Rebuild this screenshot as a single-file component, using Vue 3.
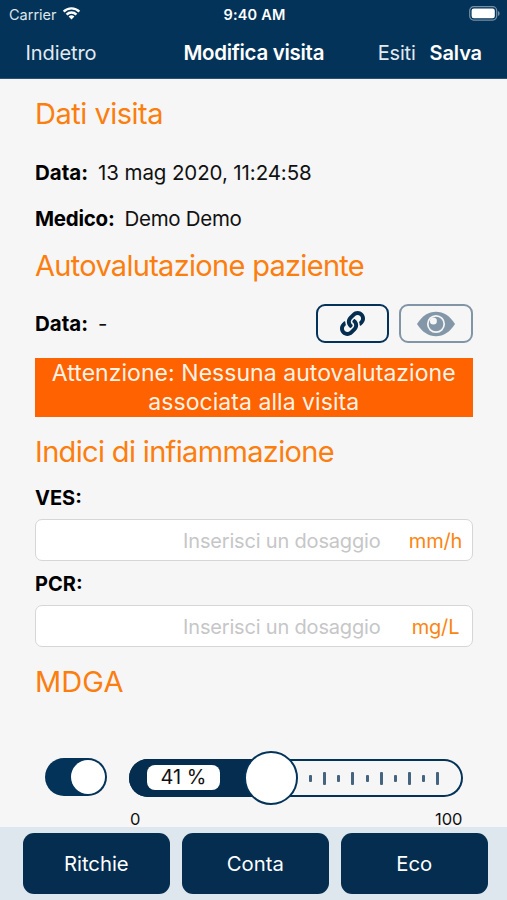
<template>
  <div class="screen">
    <header class="header">
      <div class="status-bar">
        <div class="carrier">
          <span>Carrier</span>
          <svg class="wifi" viewBox="0 0 18 14">
            <path d="M0.3 4.7a12.4 12.4 0 0 1 17.4 0l-1.7 1.8a9.9 9.9 0 0 0-14 0z" />
            <path d="M3.2 7.7a8.2 8.2 0 0 1 11.6 0l-1.8 1.8a5.7 5.7 0 0 0-8 0z" />
            <path d="M6.1 10.6a4.1 4.1 0 0 1 5.8 0L9 13.6z" />
          </svg>
        </div>
        <span class="clock">9:40 AM</span>
        <svg class="battery" viewBox="0 0 31 15">
          <rect x="0.7" y="0.7" width="27" height="13.4" rx="4" class="battery-case" />
          <rect x="2.6" y="2.6" width="23.2" height="9.6" rx="2.2" class="battery-level" />
          <path d="M29 5v5c1-.4 1.6-1.4 1.6-2.5S30 5.4 29 5z" class="battery-tip" />
        </svg>
      </div>
      <nav class="nav-bar">
        <a class="nav-link back">Indietro</a>
        <h1 class="nav-title">Modifica visita</h1>
        <div class="nav-actions">
          <a class="nav-link esiti">Esiti</a>
          <a class="nav-link save">Salva</a>
        </div>
      </nav>
    </header>

    <main class="content">
      <h2 class="section-title first">Dati visita</h2>
      <div class="info">
        <p class="info-row"><b>Data:</b><span class="date">13 mag 2020, 11:24:58</span></p>
        <p class="info-row"><b class="medico">Medico:</b><span class="name">Demo Demo</span></p>
      </div>

      <h2 class="section-title assessment">Autovalutazione paziente</h2>
      <div class="assessment-row">
        <p class="info-row"><b>Data:</b><span>-</span></p>
        <div class="icon-buttons">
          <button type="button" class="icon-button">
            <svg class="link-icon" viewBox="0 0 512 512">
              <path d="M326.612 185.391c59.747 59.809 58.927 155.698.36 214.59-.11.12-.24.25-.36.37l-67.2 67.2c-59.27 59.27-155.699 59.262-214.96 0-59.27-59.26-59.27-155.7 0-214.96l37.106-37.106c9.84-9.84 26.786-3.3 27.294 10.606.648 17.722 3.826 35.527 9.69 52.721 1.986 5.822.567 12.262-3.783 16.612l-13.087 13.087c-28.026 28.026-28.905 73.66-1.155 101.96 28.024 28.579 74.086 28.749 102.325.51l67.2-67.19c28.191-28.191 28.073-73.757 0-101.83-3.701-3.694-7.429-6.564-10.341-8.569a16.037 16.037 0 0 1-6.947-12.606c-.396-10.567 3.348-21.456 11.698-29.806l21.054-21.055c5.521-5.521 14.182-6.199 20.584-1.731a152.482 152.482 0 0 1 20.522 17.197zM467.547 44.449c-59.261-59.262-155.69-59.27-214.96 0l-67.2 67.2c-.12.12-.25.25-.36.37-58.566 58.892-59.387 154.781.36 214.59a152.454 152.454 0 0 0 20.521 17.196c6.402 4.468 15.064 3.789 20.584-1.731l21.054-21.055c8.35-8.35 12.094-19.239 11.698-29.806a16.037 16.037 0 0 0-6.947-12.606c-2.912-2.005-6.64-4.875-10.341-8.569-28.073-28.073-28.191-73.639 0-101.83l67.2-67.19c28.239-28.239 74.3-28.069 102.325.51 27.75 28.3 26.872 73.934-1.155 101.96l-13.087 13.087c-4.35 4.35-5.769 10.79-3.783 16.612 5.864 17.194 9.042 34.999 9.69 52.721.509 13.906 17.454 20.446 27.294 10.606l37.106-37.106c59.271-59.259 59.271-155.699.001-214.959z" />
            </svg>
          </button>
          <button type="button" class="icon-button disabled">
            <svg class="eye-icon" viewBox="0 0 38 26">
              <path d="M0 13C5 5 11.5.8 19 .8S33 5 38 13C33 21 26.5 25.2 19 25.2S5 21 0 13z" />
              <circle cx="19" cy="13" r="8.2" class="eye-ring" />
              <circle cx="16.4" cy="9.9" r="3.5" class="eye-glint" />
            </svg>
          </button>
        </div>
      </div>
      <div class="alert">
        <span class="alert-first">Attenzione: Nessuna autovalutazione</span>
        <span class="alert-second">associata alla visita</span>
      </div>

      <h2 class="section-title indices">Indici di infiammazione</h2>
      <div v-for="field in fields" :key="field.label" class="field">
        <label class="field-label" :for="field.label">{{ field.label }}:</label>
        <div class="field-box">
          <input :id="field.label" v-model="field.value" class="field-input" placeholder="Inserisci un dosaggio" />
          <span class="unit">{{ field.unit }}</span>
        </div>
      </div>

      <h2 class="section-title mdga">MDGA</h2>
      <div class="slider-row">
        <button type="button" :class="['toggle', { on: enabled }]" @click="enabled = !enabled">
          <span class="toggle-knob"></span>
        </button>
        <div class="slider">
          <div class="track">
            <div class="fill" :style="{ width: fillWidth }">
              <span class="percent">{{ mdga }} %</span>
            </div>
            <div class="ticks">
              <i v-for="n in 10" :key="n" :class="['tick', { tall: n % 2 === 0 }]"></i>
            </div>
          </div>
          <span class="thumb" :style="{ left: fillWidth }"></span>
        </div>
      </div>
      <div class="scale"><span>0</span><span>100</span></div>
    </main>

    <footer class="footer">
      <button v-for="action in actions" :key="action" type="button" class="action">{{ action }}</button>
    </footer>
  </div>
</template>

<script setup>
import { computed, ref } from 'vue';

const fields = ref([
  { label: 'VES', unit: 'mm/h', value: '' },
  { label: 'PCR', unit: 'mg/L', value: '' },
]);
const actions = ['Ritchie', 'Conta', 'Eco'];

const enabled = ref(true);
const mdga = ref(41);

// the thumb travels inside the rounded ends of the track
const fillWidth = computed(() => `${27 + (mdga.value / 100) * 280}px`);
</script>

<style>
body {
  margin: 0;
  background: #f6f6f6;
}
</style>

<style scoped>
.screen {
  width: 507px;
  height: 900px;
  display: flex;
  flex-direction: column;
  overflow: hidden;
  background: #f6f6f6;
  color: #111;
  font-family: Inter, "Liberation Sans", sans-serif;
  font-size: 20.5px;
}

button {
  padding: 0;
  border: none;
  font-family: inherit;
}

/* Header */
.header {
  flex: none;
  height: 79px;
  box-sizing: border-box;
  background: #043359;
  border-bottom: 1px solid #2b5273;
  color: #fff;
}

.status-bar {
  height: 28px;
  padding: 0 7px 0 9px;
  display: grid;
  grid-template-columns: 1fr auto 1fr;
  align-items: center;
  font-size: 14.5px;
}

.carrier {
  display: flex;
  align-items: center;
  gap: 5px;
  color: #dde5eb;
}

.wifi {
  width: 19px;
  height: 14px;
  margin-top: -2px;
  fill: #fff;
}

.clock {
  font-weight: 600;
  letter-spacing: 0.2px;
}

.battery {
  width: 31px;
  height: 15px;
  justify-self: end;
  margin-top: -2px;
}

.battery-case {
  fill: none;
  stroke: #7590a5;
  stroke-width: 1.2;
}

.battery-level {
  fill: #fff;
}

.battery-tip {
  fill: #7590a5;
}

.nav-bar {
  height: 49px;
  padding: 0 25px 0 25.5px;
  display: grid;
  grid-template-columns: 1fr auto 1fr;
  align-items: center;
  font-size: 20px;
  line-height: 24px;
}

.nav-title {
  margin: 0;
  font-size: 20.5px;
  font-weight: 600;
  letter-spacing: -0.3px;
}

.nav-link {
  color: #e2eaf1;
}

.back {
  letter-spacing: -0.1px;
}

.nav-actions {
  display: flex;
  justify-content: flex-end;
  gap: 14px;
}

.esiti {
  letter-spacing: -0.2px;
}

.nav-link.save {
  color: #fff;
  font-weight: 600;
  letter-spacing: -0.1px;
}

/* Content */
.content {
  flex: 1;
  min-height: 0;
  padding: 17px 34.5px 0 35px;
}

.section-title {
  margin: 0;
  height: 36px;
  line-height: 36px;
  color: #fb7e0e;
  font-size: 29px;
  font-weight: 400;
  letter-spacing: -0.7px;
  white-space: nowrap;
}

.section-title.first {
  letter-spacing: -0.5px;
}

.info {
  margin-top: 17px;
}

.info-row {
  margin: 0;
  height: 46px;
  display: flex;
  align-items: center;
  gap: 10px;
  white-space: nowrap;
}

.info-row b {
  font-weight: 700;
  color: #000;
}

.date {
  letter-spacing: -0.1px;
}

.medico {
  letter-spacing: -0.25px;
}

.name {
  letter-spacing: -0.3px;
}

.section-title.assessment {
  margin-top: 7px;
}

.assessment-row {
  margin-top: 20px;
  height: 39px;
  display: flex;
  align-items: center;
  justify-content: space-between;
}

.icon-buttons {
  display: flex;
  gap: 10px;
}

.icon-button {
  width: 73.5px;
  height: 39px;
  box-sizing: border-box;
  display: flex;
  align-items: center;
  justify-content: center;
  border: 2px solid #043359;
  border-radius: 9px;
  background: transparent;
}

.icon-button.disabled {
  border-color: #8295a6;
}

.link-icon {
  width: 25px;
  height: 25px;
  fill: #042d4f;
}

.eye-icon {
  width: 38px;
  height: 26px;
  fill: #8397a8;
}

.eye-ring {
  fill: none;
  stroke: #f6f6f6;
  stroke-width: 1.7;
}

.eye-glint {
  fill: #f6f6f6;
}

.alert {
  margin-top: 15px;
  height: 59px;
  display: flex;
  flex-direction: column;
  align-items: center;
  justify-content: center;
  background: #ff6200;
  color: #fff3e6;
  font-size: 23px;
  line-height: 29px;
  letter-spacing: 0.05px;
  white-space: nowrap;
}

.section-title.indices {
  margin: 17px 0 14px;
  letter-spacing: -0.66px;
}

.field-label {
  display: block;
  height: 28px;
  line-height: 28px;
  color: #000;
  font-size: 20px;
  font-weight: 700;
}

.field-box {
  margin: 7px 0 9px;
  height: 42px;
  box-sizing: border-box;
  padding-top: 2px;
  display: flex;
  align-items: center;
  border: 1.5px solid #d6d6d6;
  border-radius: 7px;
  background: #fff;
}

.field-input {
  flex: 1;
  min-width: 0;
  padding: 0 18px 0 0;
  border: none;
  outline: none;
  background: transparent;
  font: inherit;
  font-size: 20px;
  letter-spacing: -0.18px;
  text-align: right;
}

.field-input::placeholder {
  color: #c6c6c8;
  opacity: 1;
}

.unit {
  width: 73px;
  padding-left: 1px;
  box-sizing: border-box;
  text-align: center;
  color: #fb8510;
  font-size: 20px;
  letter-spacing: -0.2px;
}

.section-title.mdga {
  margin-top: 17px;
  letter-spacing: 0.1px;
}

/* Slider */
.slider-row {
  margin-top: 51px;
  height: 54px;
  padding: 0 10px;
  display: flex;
  align-items: center;
  gap: 22px;
}

.toggle {
  width: 62px;
  height: 38px;
  margin-top: -2px;
  padding: 2px;
  display: flex;
  align-items: center;
  border-radius: 19px;
  background: #b9c4ce;
}

.toggle.on {
  justify-content: flex-end;
  background: #043359;
}

.toggle-knob {
  width: 34px;
  height: 34px;
  border-radius: 50%;
  background: #fff;
}

.slider {
  position: relative;
  flex: 1;
}

.track {
  height: 38px;
  display: flex;
  align-items: stretch;
  border-radius: 19px;
  box-shadow: inset 0 0 0 2px #043359;
  overflow: hidden;
}

.fill {
  flex: none;
  display: flex;
  align-items: center;
  background: #042d4f;
}

.percent {
  width: 73px;
  height: 25px;
  margin: -1px 0 0 18px;
  border-radius: 8px;
  background: #fff;
  color: #111;
  font-size: 20px;
  line-height: 25px;
  text-align: center;
}

.ticks {
  flex: 1;
  padding: 0 23px 0 38px;
  display: flex;
  align-items: center;
  justify-content: space-between;
}

.tick {
  width: 3px;
  height: 7px;
  border-radius: 1px;
  background: #44647f;
}

.tick.tall {
  height: 13px;
}

.thumb {
  position: absolute;
  top: 50%;
  width: 54px;
  height: 54px;
  box-sizing: border-box;
  border: 2px solid #043359;
  border-radius: 50%;
  background: #fff;
  transform: translate(-50%, -50%);
}

.scale {
  padding: 4px 10px 0 95px;
  display: flex;
  justify-content: space-between;
  font-size: 16.5px;
  line-height: 20px;
}

/* Footer */
.footer {
  flex: none;
  height: 73px;
  box-sizing: border-box;
  padding: 6px 19.5px 6px 23px;
  display: flex;
  gap: 12.3px;
  background: #dee7ed;
}

.action {
  flex: 1;
  height: 61px;
  border-radius: 11px;
  background: #042d4f;
  color: #fff;
  font-size: 20.3px;
}
</style>
